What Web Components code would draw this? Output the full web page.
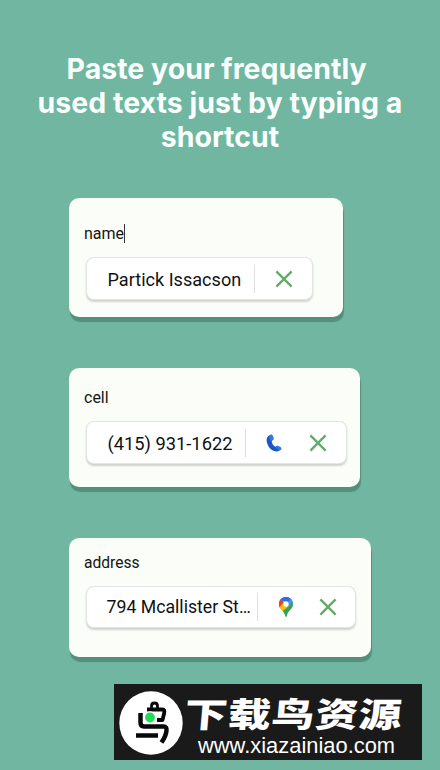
<!DOCTYPE html>
<html lang="en">
<head>
<meta charset="utf-8">
<title>Text shortcuts</title>
<style>
html, body { margin: 0; height: 100%; background: #71b6a0; }
</style>
</head>
<body>
<promo-page>
  <promo-title slot="title"><span>Paste your frequently&nbsp;</span><span>used texts just by typing a</span><span>shortcut</span></promo-title>
  <shortcut-card style="--w:274px;--top:25px">
    <span slot="label">name</span><text-caret slot="label"></text-caret>
    <suggestion-chip style="--w:225px;--left:21px;--text:147px;--size:18.1px">Partick Issacson<close-icon slot="actions" style="--gap:20px"></close-icon></suggestion-chip>
  </shortcut-card>
  <shortcut-card style="--w:291px;--top:19px">
    <span slot="label">cell</span>
    <suggestion-chip style="--w:259px;--left:21px;--text:138px;--size:18.3px">(415) 931-1622<phone-icon slot="actions" style="--gap:19px"></phone-icon><close-icon slot="actions" style="--gap:26px"></close-icon></suggestion-chip>
  </shortcut-card>
  <shortcut-card style="--w:302px;--top:14px;--label:15.6px;--gap:14px">
    <span slot="label">address</span>
    <suggestion-chip style="--w:268px;--left:20px;--text:151px;--size:17.7px;--h:40px">794 Mcallister St…<map-pin slot="actions" style="--gap:19px"></map-pin><close-icon slot="actions" style="--gap:24px"></close-icon></suggestion-chip>
  </shortcut-card>
  <site-badge slot="badge"><span slot="name">下载鸟资源</span><span slot="url">www.xiazainiao.com</span></site-badge>
</promo-page>
<script>
const define = (name, html) => customElements.define(name, class extends HTMLElement {
  constructor() {
    super();
    this.attachShadow({ mode: 'open' }).innerHTML = html;
  }
});

define('promo-page', `
<style>
:host { display: block; box-sizing: border-box; width: 440px; height: 770px; position: relative; overflow: hidden;
  background: #71b6a0; padding-top: 52px; font-family: Roboto, sans-serif; color: #151515; }
.cards { display: flex; flex-direction: column; gap: 51px; padding: 44.3px 0 0 69px; }
.badge { position: absolute; left: 114px; top: 684px; }
</style>
<slot name="title"></slot>
<div class="cards"><slot></slot></div>
<div class="badge"><slot name="badge"></slot></div>`);

define('promo-title', `
<style>
:host { display: flex; flex-direction: column; align-items: center; font: 700 28.5px/34px Inter, sans-serif; color: #f8fffc; white-space: nowrap; }
</style>
<slot></slot>`);

define('shortcut-card', `
<style>
:host { display: block; box-sizing: border-box; width: var(--w); height: 119px; padding: var(--top) 0 0 15px;
  border-radius: 10px; background: #fafdf8; box-shadow: 1px 5px 1px #548f7c; }
.label { display: flex; align-items: center; height: 21px; font-size: var(--label, 16px); }
.body { padding: var(--gap, 14px) 0 0 2.5px; }
</style>
<div class="label"><slot name="label"></slot></div>
<div class="body"><slot></slot></div>`);

define('text-caret', `
<style>:host { display: block; width: 1px; height: 19px; background: #333; margin-left: -.5px; }</style>`);

define('suggestion-chip', `
<style>
:host { display: flex; align-items: center; box-sizing: border-box; width: var(--w); height: var(--h, 41px); padding-left: var(--left);
  border-radius: 7px; background: #fff; box-shadow: 0 0 0 1px #e3e5e2, 0 2px 2px 1px #d0d2cf; font-size: var(--size); }
.text { width: var(--text); box-sizing: border-box; height: 28px; line-height: 29px; border-right: 1px solid #dedede; white-space: nowrap; color: #111; }
</style>
<div class="text"><slot></slot></div><slot name="actions"></slot>`);

define('close-icon', `
<style>:host { display: block; margin-left: var(--gap); width: 18px; height: 18px; } svg { display: block; }</style>
<svg width="18" height="18" viewBox="0 0 18 18"><path d="M1.4 1.4 16.6 16.6M16.6 1.4 1.4 16.6" fill="none" stroke="#62ab66" stroke-width="2.3"/></svg>`);

define('phone-icon', `
<style>:host { display: block; margin-left: var(--gap); width: 18px; height: 18px; } svg { display: block; }</style>
<svg width="18" height="18" viewBox="0 0 18 18">
<path d="M4.3 1.2C1.500 2.600 1 6.300 2.500 10.200c1.600 4.300 5.500 7.300 9.500 7.200 2 0 3.700-1 4.300-2.800l-3.800-2.900-2.100 1C8 11.500 6.900 9.300 6.700 7.200L8.300 5.300 6.700.8z" fill="#1c56c8"/>
<path d="M4.600 1.100C4.100 3 4.500 5 5.600 6.900L7.900 6q1.200-.8.8-2.300L7.700 1.500Q6.700-.1 4.600 1.100zM10.700 13.200q1-1.800 2.600-1.300l2.200 1.100q1.600 1.100.4 2.800c-2 .1-3.800-.8-5.200-2.600z" fill="#3a78df"/>
</svg>`);

define('map-pin', `
<style>:host { display: block; margin-left: var(--gap); width: 18px; height: 20px; } svg { display: block; }</style>
<svg width="18" height="20" viewBox="0 0 18 20">
<defs><clipPath id="pin"><path d="M9 0a7.100 7.100 0 0 0-7.100 7.100C1.900 12 7.200 13.500 8.200 19.100q.8 1.700 1.600 0C10.800 13.500 16.100 12 16.100 7.100A7.100 7.100 0 0 0 9 0z"/></clipPath></defs>
<g clip-path="url(#pin)">
<path d="M0 0h18v20H0z" fill="#34a353"/>
<path d="M0 15 14.500-2H0z" fill="#e84335"/>
<path d="M3.300 2.500 9 7.100 18 0V-1H3z" fill="#2f6fdb"/>
<path d="M9 7.100 14.600.400 18 3.500 12 9z" fill="#4b8df5"/>
<path d="M1 10.400 6.900 3.400 9 7.100 12 9 4.400 15z" fill="#fbbc04"/>
<path d="M0 11V4l3.300-1.500L6.900 5.200 2.500 10.300z" fill="#e84335"/>
</g><circle cx="9" cy="7" r="2.700" fill="#fff"/></svg>`);

define('site-badge', `
<style>
:host { display: grid; grid-template-columns: 71px 1fr; box-sizing: border-box; width: 308px; height: 76px; background: #1a1a1a; color: #fff; }
svg { display: block; margin: 7px 0 0 5px; }
.words { display: flex; flex-direction: column; }
.name { height: 50px; padding-top: 4px; box-sizing: border-box; font: 900 34px/50px "Noto Sans CJK SC", sans-serif; letter-spacing: .6px; white-space: nowrap; transform: scaleX(1.26) skewX(-4deg); transform-origin: 0 50%; }
.url { padding-left: 13px; font: 21.900px/24px "Liberation Sans", sans-serif; white-space: nowrap; }
</style>
<svg width="64" height="64" viewBox="0 0 64 64">
<circle cx="32" cy="32" r="31.700" fill="#fff"/>
<g fill="none" stroke="#080808" stroke-width="4.500" stroke-linejoin="round">
<path d="M28 18.500h15.500q2.500 0 1.700 3.500L43.500 29H38" stroke-width="3.800"/>
<path d="M21.500 22v9.500q0 4 3.500 4h19.500q3.500 0 3 4-.5 5.500-5 12"/>
<path d="M17 44.500h22"/><path d="M32.500 17.500V15q0-3 3-3t3 3v2.500" stroke-width="2.800"/></g>
<circle cx="31" cy="26.500" r="6.200" fill="#fff"/><circle cx="31" cy="26.500" r="4.900" fill="#25db5b"/></svg>
<div class="words"><div class="name"><slot name="name"></slot></div><div class="url"><slot name="url"></slot></div></div>`);
</script>
</body>
</html>
